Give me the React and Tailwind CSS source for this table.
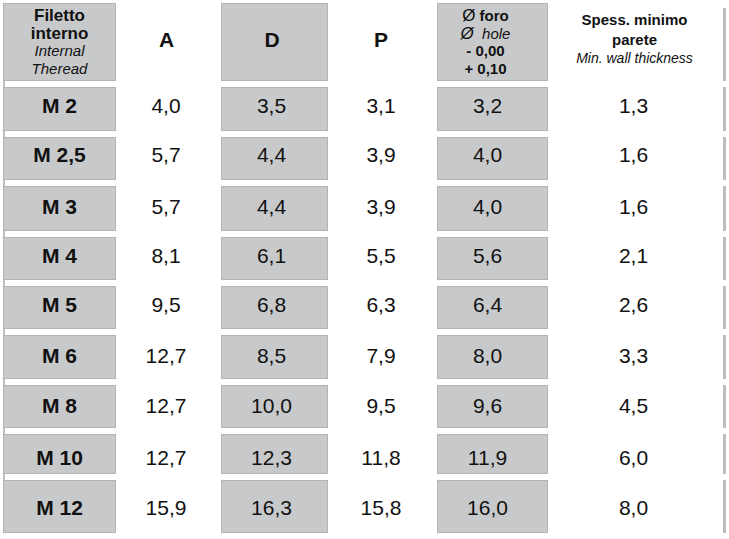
import React from "react";

const rows = [
  ["M 2", "4,0", "3,5", "3,1", "3,2", "1,3", "pb-[6px]"],
  ["M 2,5", "5,7", "4,4", "3,9", "4,0", "1,6", "pb-[8px]"],
  ["M 3", "5,7", "4,4", "3,9", "4,0", "1,6", "pb-[4px]"],
  ["M 4", "8,1", "6,1", "5,5", "5,6", "2,1", "pb-[6px]"],
  ["M 5", "9,5", "6,8", "6,3", "6,4", "2,6", "pb-[6px]"],
  ["M 6", "12,7", "8,5", "7,9", "8,0", "3,3", "pb-[2px]"],
  ["M 8", "12,7", "10,0", "9,5", "9,6", "4,5", "pb-[2px]"],
  ["M 10", "12,7", "12,3", "11,8", "11,9", "6,0", "pt-[8px]"],
  ["M 12", "15,9", "16,3", "15,8", "16,0", "8,0", "pt-[3px]"],
];

const gray = "bg-[#c8c9ca] border border-[#b4b4b4] flex items-center justify-center";
const white = "flex items-center justify-center";

export default function App() {
  return (
    <div
      className="w-[729px] h-[539px] bg-white text-[#111] overflow-hidden pt-[3px] pl-[3px]"
      style={{ fontFamily: '"Liberation Sans", Arial, sans-serif' }}
    >
      <div className="grid grid-cols-[113px_105px_107px_109px_111px_175px_3px] grid-rows-[78px_44px_43px_45px_43px_43px_44px_43px_40px_53px] gap-y-[6px] w-[723px] bg-[linear-gradient(#c0c0c0,#c0c0c0)] bg-no-repeat bg-[length:2px_100%]">
        {/* header */}
        <div className={`${gray} flex-col leading-[17.5px]`}>
          <div className="font-bold text-[17px]">Filetto</div>
          <div className="font-bold text-[17px]">interno</div>
          <div className="italic text-[15px]">Internal</div>
          <div className="italic text-[15px]">Theread</div>
        </div>
        <div className={`${white} font-bold text-[21px] pr-[4px] pb-[5px]`}>A</div>
        <div className={`${gray} font-bold text-[21px] pr-[5px] pb-[5px]`}>D</div>
        <div className={`${white} font-bold text-[21px] pr-[3px] pb-[5px]`}>P</div>
        <div className={`${gray} flex-col text-[15px] leading-[17.5px] pr-[14px]`}>
          <div className="font-bold">
            <span className="font-normal text-[17px]">Ø</span> foro
          </div>
          <div className="italic">
            <span className="text-[17px]">Ø</span>&nbsp; hole
          </div>
          <div className="font-bold">- 0,00</div>
          <div className="font-bold">+ 0,10</div>
        </div>
        <div className={`${white} flex-col text-[15px] leading-[19.5px] pb-[5px] pr-[2px]`}>
          <div className="font-bold">Spess. minimo</div>
          <div className="font-bold">parete</div>
          <div className="italic text-[14px]">Min. wall thickness</div>
        </div>
        <div className="bg-[#bdbdbd] mt-[5px]" />

        {rows.map((r) => (
          <React.Fragment key={r[0]}>
            <div className={`${gray} font-bold text-[21px] ${r[6]}`}>{r[0]}</div>
            <div className={`${white} text-[21px] pr-[5px] ${r[6]}`}>{r[1]}</div>
            <div className={`${gray} text-[21px] pr-[6px] ${r[6]}`}>{r[2]}</div>
            <div className={`${white} text-[21px] pr-[3px] ${r[6]}`}>{r[3]}</div>
            <div className={`${gray} text-[21px] pr-[10px] ${r[6]}`}>{r[4]}</div>
            <div className={`${white} text-[21px] pr-[4px] ${r[6]}`}>{r[5]}</div>
            <div className="bg-[#bdbdbd]" />
          </React.Fragment>
        ))}
      </div>
    </div>
  );
}
